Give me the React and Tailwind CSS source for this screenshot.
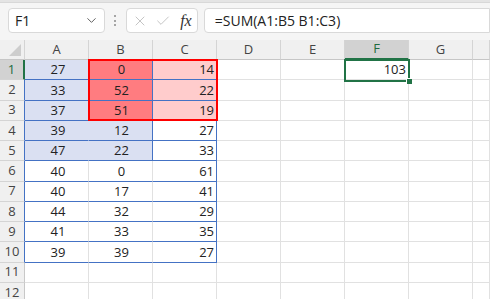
import { ChevronDown, X, Check } from 'lucide-react';

const colA = [27, 33, 37, 39, 47, 40, 40, 44, 41, 39];
const colB = [0, 52, 51, 12, 22, 0, 17, 32, 33, 39];
const colC = [14, 22, 19, 27, 33, 61, 41, 29, 35, 27];
const letters = ['A', 'B', 'C', 'D', 'E', 'F', 'G', ''];

const rowHeaderClass = (r) => {
  if (r === 1) return 'bg-[#d2d2d2] text-[#1e6b3f] border-r-2 border-r-[#217346]';
  if (r <= 10) return 'bg-[#f0f0f0] text-[#444] border-r border-r-[#4472c4]';
  return 'bg-[#f0f0f0] text-[#444] border-r border-r-[#c8c8c8]';
};

const cellClass = (r, c) => {
  const data = r <= 10;
  let bg = 'bg-white';
  let right = 'border-r-[#e1e1e1]';
  let bottom = data && c <= 2 ? 'border-b-[#4472c4]' : 'border-b-[#e1e1e1]';
  if (c === 0 && r <= 5) { bg = 'bg-[#dae0f2]'; right = 'border-r-[#dae0f2]'; }
  if (c === 1 && r <= 5) { bg = 'bg-[#dae0f2]'; right = 'border-r-[#4472c4]'; }
  if (c === 1 && r <= 3) bg = 'bg-[#ff7c80]';
  if (c === 2 && r <= 3) bg = 'bg-[#ffcccc]';
  if (c === 2 && data) right = 'border-r-[#4472c4]';
  return `${bg} border-r border-b ${right} ${bottom}`;
};

const cellText = (r, c) => {
  if (r <= 10 && c === 0) return colA[r - 1];
  if (r <= 10 && c === 1) return colB[r - 1];
  if (r <= 10 && c === 2) return colC[r - 1];
  if (r === 1 && c === 5) return 103;
  return '';
};

const alignClass = (c) => {
  if (c === 0) return 'justify-center pl-[3px]';
  if (c === 1) return 'justify-center pl-[2px]';
  if (c === 2) return 'justify-end pr-[2px]';
  return 'justify-end pr-[2px]';
};

export default function App() {
  const rows = Array.from({ length: 12 }, (_, i) => i + 1);

  return (
    <div className="w-[490px] h-[299px] overflow-hidden bg-white font-['Open_Sans',sans-serif] text-[13px] text-[#222]">
      {/* top strip */}
      <div className="h-[3px] bg-[#e4e4e4] border-b border-[#d8d8d8]" />

      {/* formula bar */}
      <div className="h-[37px] bg-[#f5f5f5] flex items-start pt-[5px] pl-[8px]">
        <div className="w-[101px] h-[25px] bg-white border border-[#d9d9d9] rounded-[4px] flex items-center pl-[6px] pr-[5px]">
          <span className="flex-1 text-[14px]">F1</span>
          <ChevronDown size={15} strokeWidth={1.5} className="text-[#555]" />
        </div>
        <div className="w-[22px] h-[25px] flex flex-col items-center justify-center gap-[2.5px]">
          <span className="w-[2px] h-[2px] rounded-full bg-[#8a8a8a]" />
          <span className="w-[2px] h-[2px] rounded-full bg-[#8a8a8a]" />
          <span className="w-[2px] h-[2px] rounded-full bg-[#8a8a8a]" />
        </div>
        <div className="w-[72px] h-[25px] bg-white border border-[#d9d9d9] rounded-[4px] flex items-center">
          <div className="w-[24px] flex justify-center ml-[1px]">
            <X size={16} strokeWidth={1.2} className="text-[#b5b5b5]" />
          </div>
          <div className="w-[24px] flex justify-center">
            <Check size={16} strokeWidth={1.2} className="text-[#b5b5b5]" />
          </div>
          <div className="w-[22px] flex justify-center">
            <span className="font-['Liberation_Serif',serif] italic text-[16px] text-[#333] leading-none">fx</span>
          </div>
        </div>
        <div className="ml-[6px] w-[300px] h-[25px] bg-white border border-[#d9d9d9] rounded-l-[4px] flex items-center pl-[10px] text-[14px]">
          =SUM(A1:B5 B1:C3)
        </div>
      </div>

      {/* sheet */}
      <div className="relative grid grid-cols-[25px_repeat(7,64px)_17px] auto-rows-[20.25px] grid-rows-[20px]">
        <div className="bg-[#f0f0f0] border-r border-b border-r-[#d4d4d4] border-b-[#c6c6c6] relative">
          <svg className="absolute right-[3px] bottom-[3px]" width="12" height="12" viewBox="0 0 12 12">
            <polygon points="12,0 12,12 0,12" fill="#cdcdcd" />
          </svg>
        </div>
        {letters.map((l, i) => (
          <div
            key={l + i}
            className={
              i === 5
                ? 'bg-[#d2d2d2] text-[#1e6b3f] border-r border-r-[#d4d4d4] border-b-2 border-b-[#217346] flex items-center justify-center'
                : 'bg-[#f0f0f0] text-[#444] border-r border-r-[#d4d4d4] border-b border-b-[#c6c6c6] flex items-center justify-center'
            }
          >
            {l}
          </div>
        ))}

        {rows.map((r) => (
          <div key={r} className="contents">
            <div className={`flex items-center justify-center border-b border-b-[#d4d4d4] ${rowHeaderClass(r)}`}>
              {r}
            </div>
            {letters.map((_, c) => (
              <div key={c} className={`flex items-center pt-[1px] ${cellClass(r, c)} ${alignClass(c)}`}>
                {cellText(r, c)}
              </div>
            ))}
          </div>
        ))}

        {/* reference range B1:C3 */}
        <div className="absolute left-[88px] top-[19px] w-[130px] h-[62px] border-2 border-[#ff0000] pointer-events-none" />
        {/* active cell F1 */}
        <div className="absolute left-[344px] top-[19px] w-[66px] h-[23px] border-2 border-[#217346] pointer-events-none" />
        <div className="absolute left-[406px] top-[38px] w-[6px] h-[6px] bg-[#217346] border-l border-t border-white" />
      </div>
    </div>
  );
}
